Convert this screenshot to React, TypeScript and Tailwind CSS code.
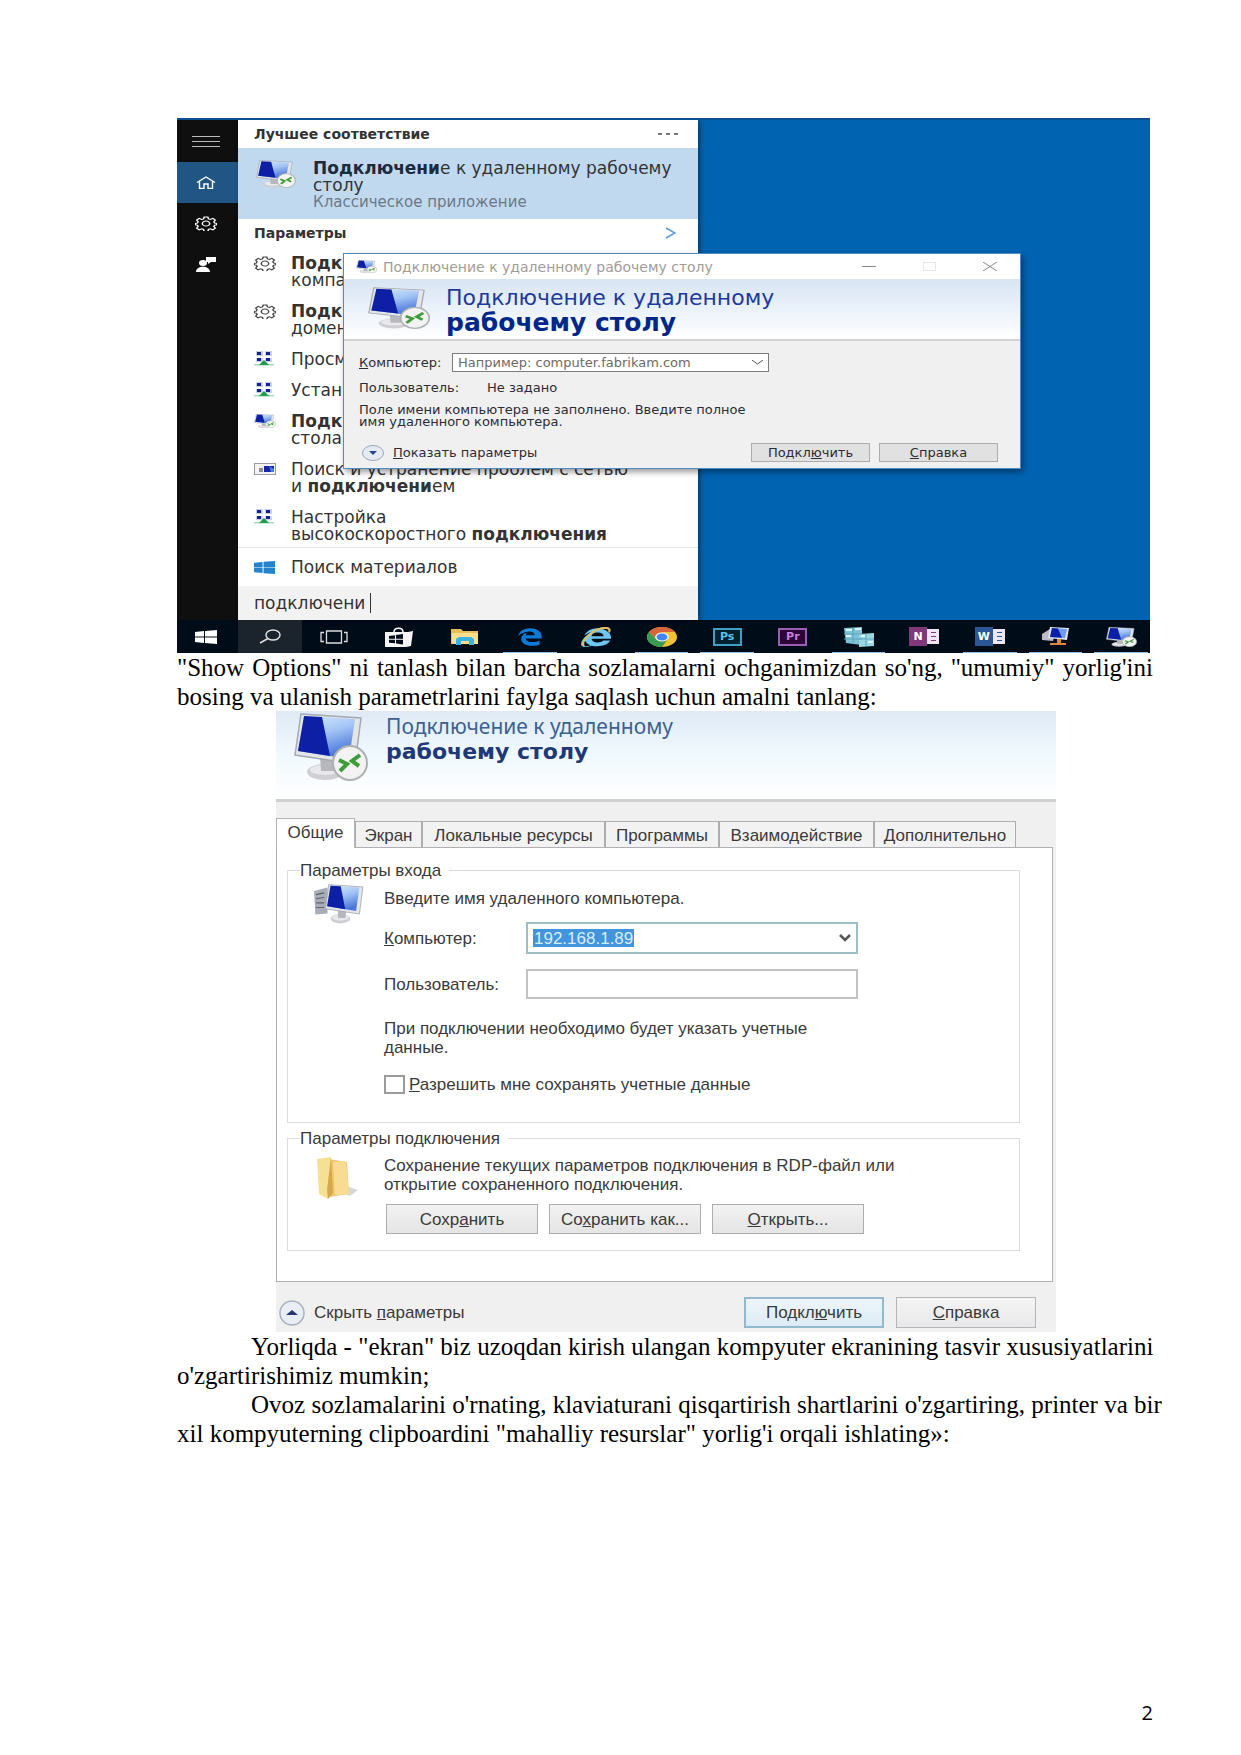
import React from "react";
import { FaInternetExplorer } from "react-icons/fa";
import { FaEdgeLegacy } from "react-icons/fa6";

function MonitorIcon({ className, badge = true, tower = false }: { className: string; badge?: boolean; tower?: boolean }) {
  const id = React.useId();
  return (
    <svg className={className} viewBox="0 0 74 68" preserveAspectRatio="none" aria-hidden="true">
      <defs>
        <linearGradient id={id} x1="0" y1="0" x2="0.4" y2="1">
          <stop offset="0" stopColor="#dcecff" />
          <stop offset="0.5" stopColor="#a3c4f5" />
          <stop offset="1" stopColor="#4a78da" />
        </linearGradient>
      </defs>
      <g transform={tower ? "translate(14 0) scale(0.81 1)" : undefined}>
        <ellipse cx="31" cy="59" rx="18" ry="8" fill="#cfcfd4" />
        <ellipse cx="31" cy="57" rx="15" ry="5" fill="#e9e9ec" />
        <path d="M26 44l16 2-2 12H27z" fill="#b7b8bd" />
      </g>
      {tower && (
        <g>
          <path d="M0 12l20-6v44L2 52z" fill="#a9adb5" />
          <path d="M3 18l12-3M3 25l12-2M3 32h12M3 40h12" stroke="#5e646e" strokeWidth="2" />
        </g>
      )}
      <g transform={tower ? "translate(16 0) scale(0.84 1)" : undefined}>
        <path d="M7 1l60 4-6 46L1 42z" fill="#e4e6ea" stroke="#a5a9b1" strokeWidth="1.5" />
        <path d="M10 3l51 3-6 40L4 38z" fill={"url(#" + id + ")"} />
        <path d="M10 3l18 1 8 39L4 38z" fill="#0c1fa5" />
      </g>
      {badge && (
        <g>
          <circle cx="56" cy="50" r="17" fill="#f2f3f2" stroke="#aeb1b0" strokeWidth="2" />
          <path d="M45 47l8 4-7 7" fill="none" stroke="#3f9c3a" strokeWidth="4" />
          <path d="M66 42l-8 6 7 5" fill="none" stroke="#3f9c3a" strokeWidth="4" />
        </g>
      )}
    </svg>
  );
}

function GearIcon({ className }: { className: string }) {
  return (
    <svg className={className} viewBox="0 0 24 24" preserveAspectRatio="none" fill="none" stroke="currentColor" strokeWidth="1.6" aria-hidden="true">
      <path d="M10 1.5h4l.7 3.1 2 .9 2.8-1.7 2.700 2.800-1.600 2.700.8 2 2.100.5v2.400l-2.100.6-.8 2 1.600 2.700-2.700 2.800-2.800-1.700-2 .9-.7 3.100h-4l-.7-3.100-2-.9-2.800 1.700-2.700-2.800 1.600-2.700-.8-2-2.100-.6v-2.400l2.100-.5.8-2-1.600-2.700 2.700-2.800 2.800 1.700 2-.9z" />
      <circle cx="12" cy="12" r="4" />
    </svg>
  );
}

function NetworkIcon() {
  return (
    <svg className="h-4 w-5" viewBox="0 0 20 16" aria-hidden="true">
      <path d="M2 0h7v5H2zM11 0h7v5h-7zM2 7h7v4H2zM11 7h7v4h-7z" fill="#c9d3e4" />
      <path d="M3 1h4v3H3zM12 1h4v3h-4zM3 7h4v3H3zM12 7h4v3h-4z" fill="#141f9c" />
      <path d="M0 13h20v1.500H0z" fill="#a8d8b8" />
      <path d="M10 9l5 5H5z" fill="#1f9d4b" />
    </svg>
  );
}

function SmallScreenIcon() {
  return (
    <svg className="h-3 w-[22px]" viewBox="0 0 22 12" aria-hidden="true">
      <rect x="0.5" y="0.5" width="21" height="11" fill="#f3f3f5" stroke="#9a9ca3" />
      <rect x="10" y="3" width="10" height="6" fill="#1726a8" />
      <path d="M5 5h4v4H5z" fill="#8b8d93" />
      <path d="M15 3l5 3v3h-3z" fill="#4d7be0" />
    </svg>
  );
}

function WindowsLogo({ className }: { className: string }) {
  return (
    <svg className={className} viewBox="0 0 22 14" preserveAspectRatio="none" fill="currentColor" aria-hidden="true">
      <path d="M0 2l9-1v5.600H0zM10 .9L22 0v6.600H10zM0 7.400h9V13l-9-1zM10 7.400h12V14l-12-.9z" />
    </svg>
  );
}

const menuItems: { icon: React.ReactNode; lines: React.ReactNode[] }[] = [
  { icon: <GearIcon className="h-[15px] w-[22px] text-[#444]" />, lines: [<b>Подк</b>, "компа"] },
  { icon: <GearIcon className="h-[15px] w-[22px] text-[#444]" />, lines: [<b>Подк</b>, "домен"] },
  { icon: <NetworkIcon />, lines: ["Просм"] },
  { icon: <NetworkIcon />, lines: ["Устан"] },
  { icon: <MonitorIcon className="h-[14px] w-[22px]" />, lines: [<b>Подк</b>, "стола"] },
  { icon: <SmallScreenIcon />, lines: ["Поиск и устранение проблем с сетью", <>и <b>подключени</b>ем</>] },
  { icon: <NetworkIcon />, lines: ["Настройка", <>высокоскоростного <b>подключения</b></>] },
];

function StartMenu() {
  return (
    <div className="flex w-[460px] flex-col bg-white font-['DejaVu_Sans'] text-[17px] leading-[17px] text-[#333] shadow-[2px_0_5px_rgba(0,0,0,0.4)]">
      <div className="flex h-7 items-center justify-between pl-4 pr-5 text-sm text-[#333]">
        <b>Лучшее соответствие</b>
        <button type="button" aria-label="Ещё" className="flex gap-1">
          <i className="h-[2px] w-1 bg-[#777]" />
          <i className="h-[2px] w-1 bg-[#777]" />
          <i className="h-[2px] w-1 bg-[#777]" />
        </button>
      </div>
      <div className="flex h-[71px] items-start bg-[#c0d9ef] pl-[18px] pt-3">
        <MonitorIcon className="h-7 w-10" />
        <div className="whitespace-nowrap pl-[17px]">
          <p><b className="text-[#1d2b3c]">Подключени</b>е к удаленному рабочему</p>
          <p>столу</p>
          <p className="text-[15px] leading-[17px] text-[#6c7886]">Классическое приложение</p>
        </div>
      </div>
      <div className="flex h-7 items-center justify-between pl-4 pr-[22px]">
        <b className="text-sm">Параметры</b>
        <svg className="h-3 w-[11px]" viewBox="0 0 11 12" fill="none" stroke="#5a9bd5" strokeWidth="1.500" aria-hidden="true">
          <path d="M1 1l9 5-9 5" />
        </svg>
      </div>
      <ul className="flex flex-col gap-[14px] pb-1 pt-2">
        {menuItems.map((item, i) => (
          <li key={i} className="flex items-start pl-4">
            <span className="flex h-4 w-[37px] items-center">{item.icon}</span>
            <span className="flex flex-col whitespace-nowrap">
              {item.lines.map((line, j) => (
                <span key={j}>{line}</span>
              ))}
            </span>
          </li>
        ))}
      </ul>
      <div className="flex h-[39px] items-center border-t border-[#e8e8e8] pl-4">
        <span className="w-[37px]"><WindowsLogo className="h-[13px] w-[21px] text-[#2483cf]" /></span>
        Поиск материалов
      </div>
      <div className="flex h-[34px] items-center bg-[#f2f2f2] pl-4">
        <input aria-label="Поиск" defaultValue="подключени" className="h-5 w-[117px] border-r border-[#333] bg-transparent outline-none" />
      </div>
    </div>
  );
}

function ConnectWindow() {
  return (
    <section className="absolute left-[166px] top-[133px] w-[678px] border border-[#4f8cc4] bg-[#f0f0f0] font-['DejaVu_Sans'] text-[13px] leading-4 text-[#2c2c34] shadow-[2px_3px_6px_rgba(0,0,0,0.4)]">
      <header className="flex h-[25px] items-center bg-white pl-3 text-[#a39c98]">
        <MonitorIcon className="h-[13px] w-[21px]" />
        <span className="grow pl-[6px] text-sm">Подключение к удаленному рабочему столу</span>
        <button type="button" aria-label="Свернуть" className="flex w-[60px] justify-center"><i className="h-px w-[14px] bg-[#888]" /></button>
        <button type="button" aria-label="Развернуть" className="flex w-[60px] justify-center"><i className="h-[9px] w-[13px] border border-[#e6e6e6]" /></button>
        <button type="button" aria-label="Закрыть" className="flex w-[61px] justify-center">
          <svg className="h-[9px] w-[14px]" viewBox="0 0 14 9" stroke="#888" aria-hidden="true"><path d="M0 0l14 9M14 0L0 9" /></svg>
        </button>
      </header>
      <div className="flex h-[62px] items-start border-b-2 border-[#d2d2d2] bg-linear-to-b from-[#d9e5f3] via-[#eaf2fa] to-white pl-6 pt-[6px]">
        <MonitorIcon className="mt-[2px] h-[42px] w-[62px]" />
        <h2 className="pl-4 text-[22px] leading-[25px] text-[#1d3a9c]">
          Подключение к удаленному
          <b className="block text-[25px] text-[#00268a]">рабочему столу</b>
        </h2>
      </div>
      <div className="pb-[6px] pl-[15px] pr-[22px] pt-3">
        <div className="flex items-center">
          <label htmlFor="host" className="w-[93px]"><u>К</u>омпьютер:</label>
          <div className="relative">
            <select id="host" className="block h-[19px] w-[317px] appearance-none border border-[#7c7c7c] bg-white pl-[5px] leading-4 text-[#6f6a62]">
              <option>Например: computer.fabrikam.com</option>
            </select>
            <svg className="pointer-events-none absolute right-[6px] top-[7px] h-[5px] w-[11px]" viewBox="0 0 11 5" fill="none" stroke="#555" aria-hidden="true"><path d="M0 0l5.500 4L11 0" /></svg>
          </div>
        </div>
        <div className="flex pt-2">
          <span className="w-32">Пользователь:</span>
          <span>Не задано</span>
        </div>
        <p className="pt-2 leading-3">
          Поле имени компьютера не заполнено. Введите полное<br />имя удаленного компьютера.
        </p>
        <div className="flex items-center pt-[15px]">
          <button type="button" className="flex grow items-center gap-[9px] pl-[3px]">
            <svg className="h-4 w-[22px]" viewBox="0 0 22 16" aria-hidden="true">
              <ellipse cx="11" cy="8" rx="10.500" ry="7.500" fill="#e6ebf3" stroke="#9aa7b8" />
              <path d="M7 6h8l-4 4z" fill="#274690" />
            </svg>
            <span><u>П</u>оказать параметры</span>
          </button>
          <button type="button" className="h-[19px] w-[119px] border border-[#adadad] bg-[#e1e1e1] leading-4">Подкл<u>ю</u>чить</button>
          <button type="button" className="ml-[9px] h-[19px] w-[119px] border border-[#adadad] bg-[#e1e1e1] leading-4"><u>С</u>правка</button>
        </div>
      </div>
    </section>
  );
}

function OfficeIcon({ letter, tone }: { letter: string; tone: string }) {
  return (
    <span className="relative flex h-5 w-[30px] items-center justify-end">
      <span className="flex h-[15px] w-4 flex-col justify-evenly bg-[#eee6f4] pl-2 pr-[3px]">
        <i className={"h-px " + tone} />
        <i className={"h-px " + tone} />
        <i className={"h-px " + tone} />
      </span>
      <b className={"absolute left-0 flex h-[19px] w-[18px] items-center justify-center text-[11px] text-white " + tone}>{letter}</b>
    </span>
  );
}

const apps: { name: string; open?: boolean; icon: React.ReactNode }[] = [
  {
    name: "Store",
    icon: (
      <svg className="h-5 w-7" viewBox="0 0 28 20" aria-hidden="true">
        <path d="M9 5c0-5 9-5 9 0" fill="none" stroke="#fff" strokeWidth="1.500" />
        <path d="M0 5h23l5-1-2 15-5 1H0z" fill="#f5f5f5" />
        <path d="M4 9l6-.7v3.500H4zM11 8l7-1v4.800h-7zM4 12.700h6v3.500L4 15.700zM11 12.700h7v4.800l-7-1z" fill="#000c18" />
      </svg>
    ),
  },
  {
    name: "Explorer",
    icon: (
      <svg className="h-[17px] w-7" viewBox="0 0 28 17" aria-hidden="true">
        <path d="M0 1h10l2 2h15v13H0z" fill="#e9bd55" />
        <path d="M1 5h26v11H1z" fill="#fbdf8c" />
        <path d="M5 17v-6l3-2h12l3 2v6h-5v-4h-8v4z" fill="#39b3e0" />
      </svg>
    ),
  },
  { name: "Edge", open: true, icon: <FaEdgeLegacy className="h-[18px] w-[26px] text-[#0c7bd8]" preserveAspectRatio="none" /> },
  {
    name: "Internet Explorer",
    icon: (
      <span className="relative flex h-5 w-[30px]">
        <FaInternetExplorer className="h-5 w-[30px] text-[#6cc8f2]" preserveAspectRatio="none" />
        <svg className="absolute inset-0 h-5 w-[30px]" viewBox="0 0 30 20" fill="none" stroke="#e8bd58" strokeWidth="2" aria-hidden="true"><path d="M3 19C-1 14 13 1 24 1c4 0 5 1 4 4" /></svg>
      </span>
    ),
  },
  {
    name: "Chrome",
    open: true,
    icon: (
      <svg className="h-5 w-[30px]" viewBox="0 0 20 20" preserveAspectRatio="none" aria-hidden="true">
        <circle cx="10" cy="10" r="10" fill="#f1c232" />
        <path d="M1.340 5A10 10 0 0 1 18.660 5H10L6 12z" fill="#d8643e" />
        <path d="M1.340 5A10 10 0 0 0 10 20l4-8-8 0z" fill="#3a9a52" />
        <circle cx="10" cy="10" r="4.600" fill="#f4f4f4" />
        <circle cx="10" cy="10" r="3.600" fill="#4285f4" />
      </svg>
    ),
  },
  { name: "Photoshop", open: true, icon: <span className="flex h-[18px] w-[29px] items-center justify-center border-2 border-[#3f9fc4] bg-[#04202f] text-[11px] font-bold text-[#5cc3e8]">Ps</span> },
  { name: "Premiere", icon: <span className="flex h-[18px] w-[29px] items-center justify-center border-2 border-[#9a5fb4] bg-[#2c0637] text-[11px] font-bold text-[#c783dd]">Pr</span> },
  {
    name: "Servers",
    open: true,
    icon: (
      <svg className="h-5 w-8" viewBox="0 0 32 20" aria-hidden="true">
        <path d="M1 1l18-1v18L3 16z" fill="#7fc4d6" />
        <path d="M16 7l15-1v13l-15 1z" fill="#9ad7e4" />
        <path d="M1 7h18M1 12h18M10 1v15M16 12h15M23 7v12" stroke="#5ba5bb" />
        <path d="M3 3h6M12 2h6M3 9h5M18 9h4M25 15h5" stroke="#d9f4fa" strokeWidth="2" />
      </svg>
    ),
  },
  { name: "OneNote", icon: <OfficeIcon letter="N" tone="bg-[#80397b]" /> },
  { name: "Word", open: true, icon: <OfficeIcon letter="W" tone="bg-[#2b5797]" /> },
  {
    name: "Remote computer",
    open: true,
    icon: (
      <svg className="h-[21px] w-[29px]" viewBox="0 0 29 21" aria-hidden="true">
        <path d="M1 8l8-5 5 4-2 8-11-1z" fill="#b9bcc4" />
        <path d="M9 1l19 1-2 12-19-2z" fill="#dfe4ec" />
        <path d="M11 2l15 1-2 9-15-1z" fill="#6f9cea" />
        <path d="M11 2l6 .5 4 9.300-12-.8z" fill="#0d1fa8" />
        <path d="M16 13h4v4h5v2H9v-2h7z" fill="#d98b3a" />
      </svg>
    ),
  },
  { name: "Remote desktop", open: true, icon: <MonitorIcon className="h-5 w-[31px]" /> },
];

function Taskbar() {
  return (
    <nav className="flex h-[33px] overflow-hidden bg-[#000c18] font-['DejaVu_Sans'] text-white">
      <button type="button" aria-label="Пуск" className="flex w-[61px] shrink-0 items-center justify-center pr-[3px] pt-px"><WindowsLogo className="h-[14px] w-[22px]" /></button>
      <button type="button" aria-label="Поиск" className="flex w-16 shrink-0 items-center justify-center bg-[#1b242c]">
        <svg className="h-[15px] w-[22px]" viewBox="0 0 22 15" fill="none" stroke="#ddd" strokeWidth="1.500" aria-hidden="true"><ellipse cx="14" cy="6" rx="7" ry="5" /><path d="M9 9.500L1 14" /></svg>
      </button>
      <button type="button" aria-label="Представление задач" className="flex w-16 shrink-0 items-center justify-center">
        <svg className="h-[14px] w-7" viewBox="0 0 28 14" fill="none" stroke="#ddd" aria-hidden="true"><path d="M6.500 1h15v12h-15zM4 2.500H1v9h3M24 2.500h3v9h-3" strokeWidth="1.300" /></svg>
      </button>
      <div className="-mr-1 flex grow">
        {apps.map((app) => (
          <button key={app.name} type="button" aria-label={app.name} className="relative flex min-w-0 flex-1 items-center justify-center">
            {app.icon}
            {app.open && <i className="absolute inset-x-[6px] bottom-0 h-px bg-[#8fc4e8]" />}
          </button>
        ))}
      </div>
    </nav>
  );
}

function DesktopFigure() {
  return (
    <figure className="relative mr-[3px] overflow-hidden border-t-2 border-[#0a4f8f] bg-[#0063b1]">
      <div className="flex">
        <nav className="flex w-[61px] shrink-0 flex-col bg-[#0f0f0f] text-white">
          <button type="button" aria-label="Меню" className="flex h-[42px] flex-col items-center justify-center gap-1 pr-[3px]">
            <i className="h-px w-7 bg-[#bbb]" />
            <i className="h-px w-7 bg-[#bbb]" />
            <i className="h-px w-7 bg-[#bbb]" />
          </button>
          <button type="button" aria-label="Главная" className="flex h-[41px] items-center justify-center bg-[#215583] pr-[3px]">
            <svg className="h-[13px] w-5" viewBox="0 0 20 13" fill="none" stroke="#fff" strokeWidth="1.400" aria-hidden="true"><path d="M1 6.500L10 1l9 5.500M3.500 5.500v7H8v-4.500h4v4.500h4.500v-7" /></svg>
          </button>
          <button type="button" aria-label="Настройки" className="flex h-[41px] items-center justify-center pr-[3px]"><GearIcon className="h-[15px] w-[22px]" /></button>
          <button type="button" aria-label="Отзывы" className="flex h-[41px] items-center justify-center pr-[3px]">
            <svg className="h-[15px] w-5" viewBox="0 0 20 15" fill="#fff" aria-hidden="true"><ellipse cx="7" cy="6" rx="4" ry="3" /><path d="M0 15c0-7 14-7 14 0zM10 0h10v5h-5l-3 2V5h-2z" /></svg>
          </button>
        </nav>
        <StartMenu />
      </div>
      <ConnectWindow />
      <Taskbar />
    </figure>
  );
}

function SettingsFigure() {
  const inactive = "mb-px border border-b-0 border-[#adadad] bg-[#f2f2f2] pb-[2px] pt-1";
  const plain = "h-[30px] border border-[#adadad] bg-linear-to-b from-[#f2f2f2] to-[#e4e4e4]";
  return (
    <figure className="ml-[99px] mr-[97px] bg-[#f0f0f0] font-['Liberation_Sans'] text-[17px] leading-[19px] text-[#3a3a3a]">
      <div className="flex h-[91px] items-start border-b-[3px] border-[#d0d0d2] bg-linear-to-b from-[#dfeaf6] via-[#f0f9fd] to-white pl-[18px] pt-[2px]">
        <MonitorIcon className="h-[68px] w-[74px]" />
        <h2 className="pl-[18px] font-['Noto_Sans'] text-[21px] leading-[26px] text-[#3d5f91]">
          Подключение к удаленному
          <b className="block font-['DejaVu_Sans'] text-[22px] text-[#1f3878]">рабочему столу</b>
        </h2>
      </div>
      <div className="pr-[3px] pt-4">
        <div role="tablist" className="relative z-10 -mb-px flex items-end whitespace-nowrap">
          <button type="button" role="tab" aria-selected="true" className="w-[79px] border border-b-0 border-[#b5b5b5] bg-white pb-[6px] pt-1">Общие</button>
          <button type="button" role="tab" className={inactive + " w-[67px]"}>Экран</button>
          <button type="button" role="tab" className={inactive + " w-[183px]"}>Локальные ресурсы</button>
          <button type="button" role="tab" className={inactive + " w-[114px]"}>Программы</button>
          <button type="button" role="tab" className={inactive + " w-[155px]"}>Взаимодействие</button>
          <button type="button" role="tab" className={inactive + " w-[142px]"}>Дополнительно</button>
        </div>
        <div className="border border-[#b0b0b4] bg-white pb-[30px] pl-[10px] pr-8 pt-[13px]">
          <fieldset className="border border-[#dcdcdc] pb-7">
            <legend className="ml-3 pr-2">Параметры входа</legend>
            <div className="flex">
              <div className="w-24 pl-[26px] pt-1"><MonitorIcon className="h-10 w-[50px]" badge={false} tower /></div>
              <div>
                <p className="pt-[9px]">Введите имя удаленного компьютера.</p>
                <div className="flex items-center pt-[14px]">
                  <label htmlFor="computer" className="w-[142px]"><u>К</u>омпьютер:</label>
                  <div className="flex h-8 w-[332px] items-center justify-between border-2 border-[#9dbcc4] pl-[5px] pr-[5px]">
                    <input id="computer" defaultValue="192.168.1.89" className="h-[18px] w-[101px] bg-[#4294dc] px-px text-[#d9efff] outline-none" />
                    <svg className="h-2 w-3" viewBox="0 0 12 8" fill="none" stroke="#555" strokeWidth="2.500" aria-hidden="true"><path d="M1 1l5 5 5-5" /></svg>
                  </div>
                </div>
                <div className="flex items-center pt-[15px]">
                  <label htmlFor="user" className="w-[142px]">Пользователь:</label>
                  <input id="user" className="h-[30px] w-[332px] border-2 border-[#c2c2c2] px-1 outline-none" />
                </div>
                <p className="pt-5">При подключении необходимо будет указать учетные<br />данные.</p>
                <label className="flex items-center gap-1 pt-[18px]">
                  <input type="checkbox" className="h-[19px] w-[21px] appearance-none border-2 border-[#9b9b9b] bg-white" />
                  <span><u>Р</u>азрешить мне сохранять учетные данные</span>
                </label>
              </div>
            </div>
          </fieldset>
          <fieldset className="mt-[6px] border border-[#dcdcdc] pb-4">
            <legend className="ml-3 pr-2">Параметры подключения</legend>
            <div className="flex">
              <div className="w-24 shrink-0 pl-7 pt-2">
                <svg className="h-11 w-[42px]" viewBox="0 0 42 44" aria-hidden="true">
                  <path d="M30 30l12 4-8 6-8-3z" fill="#d7d7d5" />
                  <path d="M12 3l19 3 2 32-20 3z" fill="#f0c76e" />
                  <path d="M17 6l13-1 3 33-14 1z" fill="#f8dc94" />
                  <path d="M1 3l14-2 1 36-4 6-9-5z" fill="#f6e094" />
                  <path d="M15 1l2 36-5 6-1-9z" fill="#d5a849" />
                </svg>
              </div>
              <div>
                <p className="pt-2">Сохранение текущих параметров подключения в RDP-файл или<br />открытие сохраненного подключения.</p>
                <div className="flex gap-[11px] pl-[2px] pt-[10px]">
                  <button type="button" className={plain + " w-[152px]"}>Сохр<u>а</u>нить</button>
                  <button type="button" className={plain + " w-[152px]"}>Со<u>х</u>ранить как...</button>
                  <button type="button" className={plain + " w-[152px]"}><u>О</u>ткрыть...</button>
                </div>
              </div>
            </div>
          </fieldset>
        </div>
      </div>
      <div className="flex items-center pb-1 pl-[3px] pr-5 pt-[15px]">
        <button type="button" className="flex grow items-center gap-[9px]">
          <svg className="h-[26px] w-[26px]" viewBox="0 0 26 26" aria-hidden="true">
            <circle cx="13" cy="13" r="12" fill="#e9edf5" stroke="#a8b0c0" strokeWidth="1.500" />
            <path d="M7 15l6-5 6 5z" fill="#27386e" />
          </svg>
          <span>Скрыть <u>п</u>араметры</span>
        </button>
        <button type="button" className="h-[31px] w-[140px] border-2 border-[#93b9ce] bg-linear-to-b from-[#edf5fa] to-[#dcebf4]">Подкл<u>ю</u>чить</button>
        <button type="button" className="ml-3 h-[31px] w-[140px] border border-[#b5b5b8] bg-linear-to-b from-[#f4f4f4] to-[#e8e8ea]"><u>С</u>правка</button>
      </div>
    </figure>
  );
}

export default function App() {
  return (
    <div className="flex min-h-screen flex-col bg-white pb-7 pl-[177px] pr-[88px] pt-[118px] font-['Liberation_Serif'] text-[25px] leading-[29px] text-black">
      <DesktopFigure />
      <p className="text-justify">
        "Show Options" ni tanlash bilan barcha sozlamalarni ochganimizdan so'ng, "umumiy" yorlig'ini bosing va ulanish parametrlarini faylga saqlash uchun amalni tanlang:
      </p>
      <SettingsFigure />
      <p className="indent-[74px]">
        <span className="whitespace-nowrap">Yorliqda - "ekran" biz uzoqdan kirish ulangan kompyuter ekranining tasvir xususiyatlarini</span>{" "}
        o'zgartirishimiz mumkin;
      </p>
      <p className="indent-[74px]">
        <span className="whitespace-nowrap">Ovoz sozlamalarini o'rnating, klaviaturani qisqartirish shartlarini o'zgartiring, printer va bir</span>{" "}
        xil kompyuterning clipboardini "mahalliy resurslar" yorlig'i orqali ishlating»:
      </p>
      <footer className="mt-auto text-right font-['Open_Sans'] text-xl leading-[29px]">2</footer>
    </div>
  );
}
